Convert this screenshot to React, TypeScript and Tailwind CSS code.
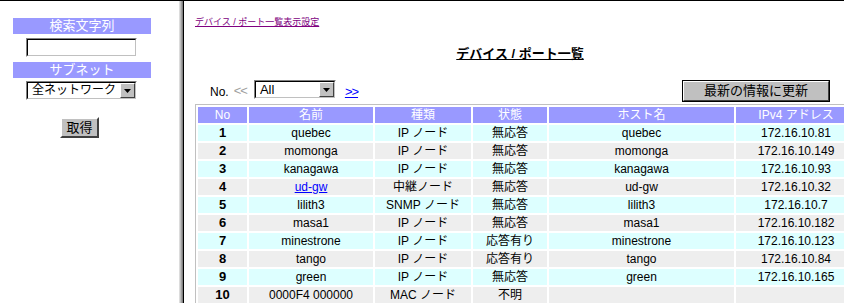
import React from "react";

type Row = {
  no: number;
  name: string;
  kind: string;
  status: string;
  host: string;
  ip: string;
  link?: boolean;
};

const rows: Row[] = [
  { no: 1, name: "quebec", kind: "IP ノード", status: "無応答", host: "quebec", ip: "172.16.10.81" },
  { no: 2, name: "momonga", kind: "IP ノード", status: "無応答", host: "momonga", ip: "172.16.10.149" },
  { no: 3, name: "kanagawa", kind: "IP ノード", status: "無応答", host: "kanagawa", ip: "172.16.10.93" },
  { no: 4, name: "ud-gw", kind: "中継ノード", status: "無応答", host: "ud-gw", ip: "172.16.10.32", link: true },
  { no: 5, name: "lilith3", kind: "SNMP ノード", status: "無応答", host: "lilith3", ip: "172.16.10.7" },
  { no: 6, name: "masa1", kind: "IP ノード", status: "無応答", host: "masa1", ip: "172.16.10.182" },
  { no: 7, name: "minestrone", kind: "IP ノード", status: "応答有り", host: "minestrone", ip: "172.16.10.123" },
  { no: 8, name: "tango", kind: "IP ノード", status: "応答有り", host: "tango", ip: "172.16.10.84" },
  { no: 9, name: "green", kind: "IP ノード", status: "無応答", host: "green", ip: "172.16.10.165" },
  { no: 10, name: "0000F4 000000", kind: "MAC ノード", status: "不明", host: "", ip: "" },
];

const font = { fontFamily: '"Liberation Sans", "Noto Sans CJK JP", sans-serif' };

// old-style dropdown: white field + gray arrow button
function FakeSelect({ label, width, size }: { label: string; width: string; size: string }) {
  return (
    <div
      className={`${width} h-[19px] flex border border-t-[#808080] border-l-[#808080] border-r-white border-b-white`}
    >
      <div className="flex-1 min-w-0 flex border border-t-black border-l-black border-r-[#c0c0c0] border-b-[#c0c0c0] bg-white">
        <span className={`flex-1 min-w-0 overflow-hidden whitespace-nowrap pl-[4px] ${size} leading-[15px] text-black`}>{label}</span>
        <div className="w-[15px] h-[15px] shrink-0 bg-[#c0c0c0] flex items-center justify-center border border-t-white border-l-white border-r-[#404040] border-b-[#404040]">
          <svg width="7" height="4" viewBox="0 0 7 4">
            <path d="M0 0h7L3.5 4z" fill="#000" />
          </svg>
        </div>
      </div>
    </div>
  );
}

function SideBar() {
  return (
    <div className="w-[179px] shrink-0 bg-white pt-[17px] pl-[13px]">
      <div className="w-[138px] flex flex-col items-center">
        <div className="w-full h-[16px] bg-[#9999ff] text-white text-[13px] leading-[16px] text-center">
          検索文字列
        </div>
        <div className="mt-[4px] ml-[-1px] w-[111px] h-[19px] border border-t-[#808080] border-l-[#808080] border-r-white border-b-white">
          <div className="w-full h-full bg-white border border-t-black border-l-black border-r-[#c0c0c0] border-b-[#c0c0c0]" />
        </div>
        <div className="mt-[5px] w-full h-[16px] bg-[#9999ff] text-white text-[13px] leading-[16px] text-center">
          サブネット
        </div>
        <div className="mt-[3px] ml-[-1px]">
          <FakeSelect label="全ネットワーク" width="w-[111px]" size="text-[12px]" />
        </div>
        <button className="mt-[17px] ml-[-5px] w-[39px] h-[21px] bg-[#c0c0c0] text-black text-[13px] leading-[17px] border-2 border-t-white border-l-white border-r-[#404040] border-b-[#404040]">
          取得
        </button>
      </div>
    </div>
  );
}

function Cell({ children, w, className = "" }: { children?: React.ReactNode; w: string; className?: string }) {
  return <td className={`${w} h-[16px] p-0 leading-[16px] text-center whitespace-nowrap ${className}`}>{children}</td>;
}

export default function App() {
  return (
    <div className="w-[844px] h-[303px] flex overflow-hidden bg-white border-t border-black text-black" style={font}>
      <SideBar />

      {/* frame divider */}
      <div className="flex shrink-0">
        <div className="w-[1px] bg-[#dcdcdc]" />
        <div className="w-[1px] bg-[#c0c0c0]" />
        <div className="w-[1px] bg-[#a0a0a0]" />
        <div className="w-[1px] bg-[#808080]" />
        <div className="w-[1px] bg-black" />
      </div>

      <div className="flex-1 min-w-0 overflow-hidden pl-[11px]">
        <div className="pt-[15px] h-[27px] text-[9px] leading-[12px]">
          <a href="#" className="text-[#800080] underline">
            デバイス / ポート一覧表示設定
          </a>
        </div>

        <div className="mt-[18px] h-[16px] w-[650px] text-center text-[13px] leading-[16px]">
          <span className="font-bold underline">デバイス / ポート一覧</span>
        </div>

        <div className="mt-[18px] h-[22px] flex items-start text-[12px] leading-[14px]">
          <span className="ml-[15px] mt-[5px]">No.</span>
          <span className="ml-[5px] mt-[4px] text-[13px] text-[#a0a0a0] tracking-[-1px]">&lt;&lt;</span>
          <div className="ml-[7px]">
            <FakeSelect label="All" width="w-[82px]" size="text-[13px]" />
          </div>
          <a href="#" className="ml-[9px] mt-[5px] text-[13px] text-[#0000ff] underline tracking-[-1px]">
            &gt;&gt;
          </a>
          <button className="ml-[324px] w-[148px] h-[22px] border border-black bg-[#c0c0c0] p-0">
            <div className="h-full border border-t-white border-l-white border-r-[#404040] border-b-[#404040] text-[13px] leading-[18px]">
              最新の情報に更新
            </div>
          </button>
        </div>

        <table className="mt-[2px] table-fixed border-separate border-spacing-[2px] border border-[#c0c0c0] text-[12px] w-[664px]">
          <thead>
            <tr className="text-white">
              <Cell w="w-[49px]" className="bg-[#9999ff]">No</Cell>
              <Cell w="w-[124px]" className="bg-[#9999ff]">名前</Cell>
              <Cell w="w-[96px]" className="bg-[#9999ff]">種類</Cell>
              <Cell w="w-[74px]" className="bg-[#9999ff]">状態</Cell>
              <Cell w="w-[185px]" className="bg-[#9999ff]">ホスト名</Cell>
              <Cell w="w-[120px]" className="bg-[#9999ff]">IPv4 アドレス</Cell>
            </tr>
          </thead>
          <tbody>
            {rows.map((r) => {
              const bg = r.no % 2 === 1 ? "bg-[#ddffff]" : "bg-[#eeeeee]";
              return (
                <tr key={r.no}>
                  <Cell w="w-[49px]" className={`${bg} font-bold text-[13px]`}>{r.no}</Cell>
                  <Cell w="w-[124px]" className={bg}>
                    {r.link ? (
                      <a href="#" className="text-[#0000ff] underline">{r.name}</a>
                    ) : (
                      r.name
                    )}
                  </Cell>
                  <Cell w="w-[96px]" className={bg}>{r.kind}</Cell>
                  <Cell w="w-[74px]" className={bg}>{r.status}</Cell>
                  <Cell w="w-[185px]" className={bg}>{r.host}</Cell>
                  <Cell w="w-[120px]" className={bg}>{r.ip}</Cell>
                </tr>
              );
            })}
          </tbody>
        </table>
      </div>
    </div>
  );
}
